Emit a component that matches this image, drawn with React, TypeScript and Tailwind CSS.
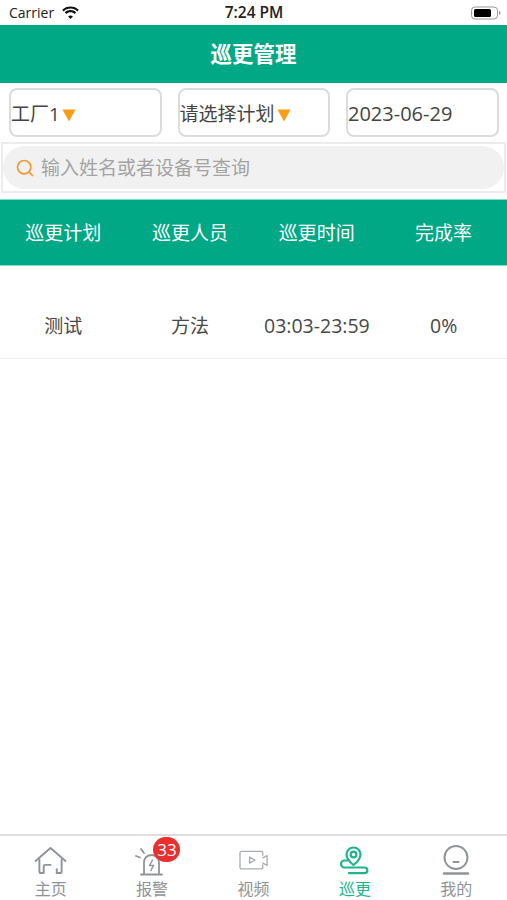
import React from 'react';
import { Search } from 'lucide-react';

const columns = ['巡更计划', '巡更人员', '巡更时间', '完成率'];
const row = ['测试', '方法', '03:03-23:59', '0%'];

const StatusBar = () => (
  <div className="h-[25px] grid grid-cols-3 items-center pl-[9px] pr-[5px] text-[14px] text-[#222]">
    <div className="flex items-center gap-[7px]">
      <span>Carrier</span>
      <svg width="19" height="14" viewBox="0 0 19 14" fill="#111">
        <path d="M9.5 2.6c2.6 0 5 1 6.8 2.8l1.5-1.6C15.6 1.6 12.7.4 9.5.4S3.4 1.6 1.2 3.8l1.5 1.6C4.5 3.6 6.9 2.6 9.5 2.6z" />
        <path d="M9.5 6.2c1.6 0 3 .6 4.2 1.7l1.5-1.6C13.7 4.8 11.7 4 9.5 4S5.3 4.8 3.8 6.3l1.5 1.6C6.500 6.800 7.900 6.200 9.5 6.200z" />
        <path d="M9.5 9.5c-.9 0-1.7.3-2.4.9l2.4 2.7 2.4-2.7c-.7-.6-1.5-.9-2.4-.9z" />
      </svg>
    </div>
    <span className="font-semibold text-[15.5px] text-center pr-[3px]">7:24 PM</span>
    <svg className="justify-self-end" width="31" height="14" viewBox="0 0 31 14" fill="none">
      <rect x="0.5" y="1" width="26" height="12" rx="3.5" fill="#fff" stroke="#9a9a9a" />
      <rect x="3" y="3" width="17" height="8" rx="1.5" fill="#000" />
      <path d="M28 5v4c.9-.3 1.5-1.100 1.500-2s-.6-1.700-1.500-2z" fill="#9a9a9a" />
    </svg>
  </div>
);

const Picker = ({ label, arrow = false, latin = false }: { label: string; arrow?: boolean; latin?: boolean }) => (
  <div className={`w-[152.5px] h-[49px] border-2 border-[#dcdcdc] rounded-[8px] bg-white flex items-center text-[#444] ${latin ? 'text-[20px] pt-[2px]' : 'text-[19px] pt-[4px]'}`}>
    <span>{label}</span>
    {arrow && (
      <svg className="ml-[2px] mt-[1px]" width="14" height="13" viewBox="0 0 14 13">
        <path d="M0.5 0.5h13L7 12.500z" fill="#fb9d12" />
      </svg>
    )}
  </div>
);

const TabItem = ({ label, active, children }: { label: string; active?: boolean; children: React.ReactNode }) => (
  <div className="relative flex-1 flex flex-col items-center pt-[8px]">
    <div className="h-[32px] flex items-center justify-center">{children}</div>
    <span className={`text-[16px] leading-[20px] mt-[3px] ${active ? 'text-[#20b48e]' : 'text-[#8f9497]'}`}>{label}</span>
  </div>
);

export default function App() {
  return (
    <div
      className="w-[507px] h-[900px] bg-white flex flex-col overflow-hidden"
      style={{ fontFamily: '"Open Sans", "Noto Sans CJK SC", sans-serif' }}
    >
      <StatusBar />

      <div className="h-[58px] bg-[#00a886] flex items-center justify-center pt-[1px] text-white text-[21.5px] font-bold">
        巡更管理
      </div>

      {/* Filters */}
      <div className="flex gap-[16px] pl-[9px] pt-[5px] pb-[5px]">
        <Picker label="工厂1" arrow />
        <Picker label="请选择计划" arrow />
        <Picker label="2023-06-29" latin />
      </div>

      {/* Search */}
      <div className="mx-[1px] h-[51px] border-2 border-[#ececec] flex items-center">
        <div className="w-full h-[43px] rounded-full bg-[#f1f1f1] flex items-center pl-[12px] gap-[6px] pt-[1px] text-[19px] text-[#a3a3a3]">
          <Search size={20} strokeWidth={2} color="#f2992e" />
          <span>输入姓名或者设备号查询</span>
        </div>
      </div>

      {/* Table head */}
      <div className="mt-[6px] h-[67px] bg-[#00a886] border-y border-[#7fdcc8] grid grid-cols-4 items-center text-center pt-[2px] text-white text-[19px]">
        {columns.map((c) => (
          <span key={c}>{c}</span>
        ))}
      </div>

      {/* Rows */}
      <div className="h-[93px] border-b border-[#eeeeee] grid grid-cols-4 items-center text-center text-[19px] text-[#484848] pt-[28px]">
        {row.map((c, i) => (
          <span key={c} className={i > 1 ? 'text-[19.5px]' : ''}>
            {c}
          </span>
        ))}
      </div>

      <div className="flex-1" />

      {/* Tab bar */}
      <div className="h-[66px] border-t-2 border-[#dedede] flex">
        <TabItem label="主页">
          <svg width="33" height="29" viewBox="0 0 34 30" fill="none" stroke="#8f9497" strokeWidth="2" strokeLinecap="round" strokeLinejoin="round">
            <path d="M1.500 15.500 17 2l15.500 13.500" />
            <path d="M5.500 14v12c0 1.500 1 2 2 2h2.500v-7c0-1 .5-1.500 1.500-1.500h5.500" />
            <path d="M28.500 14v12c0 1.500-1 2-2 2h-3" />
            <path d="M23.500 24v4" />
          </svg>
        </TabItem>
        <TabItem label="报警">
          <svg width="34" height="32" viewBox="0 0 34 32" fill="none" stroke="#8f9497" strokeWidth="1.800" strokeLinecap="round" strokeLinejoin="round">
            <path d="M9 30V18c0-4 3.500-7 7.500-7s7.500 3 7.500 7v12" />
            <path d="M6 30.500h21" />
            <path d="M17.500 16l-3 5.500h4l-2.500 5" strokeWidth="1.400" />
            <path d="M6 5l3 4" />
            <path d="M1 12l4 1.500" />
          </svg>
          <span className="absolute top-[1px] left-[52px] h-[25px] min-w-[27px] px-[2px] rounded-full bg-[#e9302f] text-white text-[17px] leading-[25px] text-center font-medium">
            33
          </span>
        </TabItem>
        <TabItem label="视频">
          <svg width="32" height="21" viewBox="0 0 34 24" fill="none" stroke="#a9adaf" strokeWidth="1.500" strokeLinecap="round" strokeLinejoin="round">
            <path d="M27 6V3c0-1-.5-1.500-1.500-1.500H2.500C1.500 1.500 1 2 1 3v17c0 1 .5 1.500 1.500 1.500h23c1 0 1.500-.5 1.500-1.500v-3" />
            <path d="M27 9l5-2.500v11L27 15" />
            <path d="M12 8l6 3.500-6 3.500z" />
          </svg>
        </TabItem>
        <TabItem label="巡更" active>
          <svg width="29" height="29" viewBox="0 0 29 29" fill="none" stroke="#20b48e" strokeWidth="2.200" strokeLinecap="round" strokeLinejoin="round">
            <path d="M13.500 19c-4.500-3.500-7-6.500-7-10.500a7 7 0 0 1 14 0c0 4-2.500 7-7 10.500z" />
            <circle cx="13.500" cy="8.500" r="2.800" />
            <path d="M7 14.500H4.500a3.500 3.500 0 0 0 0 7H24.500a2.800 2.800 0 0 1 0 5.700H9" />
          </svg>
        </TabItem>
        <TabItem label="我的">
          <svg width="28" height="30" viewBox="0 0 28 30" fill="none" stroke="#8f9497" strokeWidth="2" strokeLinecap="round">
            <circle cx="14" cy="12.500" r="11.500" />
            <path d="M11.500 17h5" />
            <path d="M2 28.500h24" strokeWidth="2.400" />
          </svg>
        </TabItem>
      </div>
    </div>
  );
}
